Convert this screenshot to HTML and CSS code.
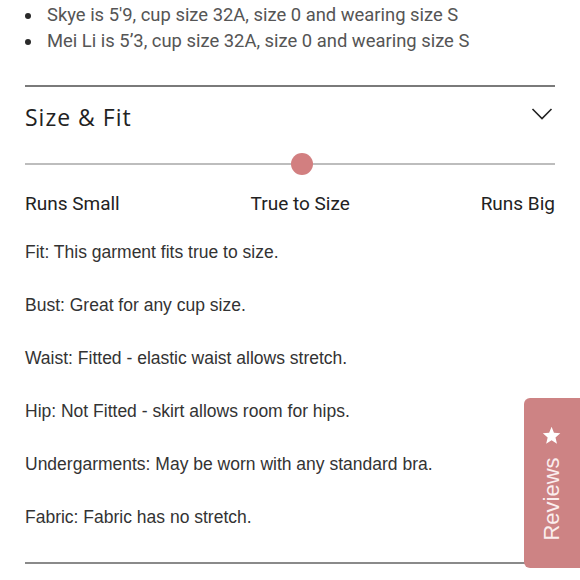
FILE: index.html
```html
<html>
<head>
<title>Size &amp; Fit</title>
<link rel="stylesheet" href="styles.css">
</head>
<body>
<div class="page">
	<ul class="models">
		<li>Skye is 5'9, cup size 32A, size 0 and wearing size S</li>
		<li>Mei Li is 5’3, cup size 32A, size 0 and wearing size S</li>
	</ul>

	<div class="section">
		<div class="sectionHead">
			<h2>Size &amp; Fit</h2>
			<svg class="chevron" width="22" height="14" viewBox="0 0 22 14"><path d="M1.5 2 L11 11.5 L20.5 2" fill="none" stroke="#222" stroke-width="1.6"/></svg>
		</div>

		<div class="scale">
			<div class="track"><span class="knob"></span></div>
			<div class="scaleLabels">
				<span>Runs Small</span>
				<span>True to Size</span>
				<span>Runs Big</span>
			</div>
		</div>

		<div class="notes">
			<p>Fit: This garment fits true to size.</p>
			<p>Bust: Great for any cup size.</p>
			<p>Waist: Fitted - elastic waist allows stretch.</p>
			<p>Hip: Not Fitted - skirt allows room for hips.</p>
			<p>Undergarments: May be worn with any standard bra.</p>
			<p>Fabric: Fabric has no stretch.</p>
		</div>
	</div>
</div>

<div class="reviewsTab">
	<span class="reviewsText">Reviews<svg class="star" width="20" height="20" viewBox="0 0 24 24"><path d="M12 1.5 L14.9 8.6 L22.5 9.2 L16.7 14.2 L18.5 21.7 L12 17.7 L5.5 21.7 L7.3 14.2 L1.5 9.2 L9.1 8.6 Z" fill="#fff"/></svg></span>
</div>
</body>
</html>
```

FILE: styles.css
```css
body {margin: 0; background: #fff; color: #222;}

.page {padding: 0 25px 0 25px;}

/* Model list */
.models {margin: 0; padding: 2px 0 0 0; list-style: none; font-family: Roboto, sans-serif; font-size: 18.4px; color: #555; line-height: 26px;}
.models li {display: flex; align-items: center;}
.models li::before {content: ""; flex: none; width: 6px; height: 6px; border-radius: 50%; background: #2a2a2a; margin: 1px 16px 0 0;}

/* Accordion section */
.section {margin-top: 31px; border-top: 2px solid #7a7a7a; border-bottom: 2px solid #8a8a8a;}
.sectionHead {display: flex; justify-content: space-between; align-items: center; height: 60px;}
.sectionHead h2 {margin: 0; font-family: "Open Sans", sans-serif; font-weight: 400; font-size: 23px; letter-spacing: 1px; color: #222;}
.chevron {margin-right: 2px; margin-top: -6px;}

/* Fit scale */
.scale {margin-top: 16px;}
.track {position: relative; height: 2px; background: #bdbdbd;}
.knob {position: absolute; left: 52.3%; top: 50%; width: 22px; height: 22px; margin: -11.5px 0 0 -11px; border-radius: 50%; background: #d27f80;}
.scaleLabels {display: flex; justify-content: space-between; margin-top: 28px; font-family: Roboto, sans-serif; font-size: 19px; line-height: 22px; color: #222;}

/* Notes */
.notes {padding: 27px 0 35px 0; font-family: "Liberation Sans", Arial, sans-serif; font-size: 17.5px; color: #333;}
.notes p {margin: 0 0 33px 0; line-height: 20px;}
.notes p:last-child {margin-bottom: 0;}

/* Floating reviews tab */
.reviewsTab {position: fixed; right: 0; top: 398px; width: 56px; height: 170px; background: #cd8384; border-radius: 6px 0 0 6px; display: flex; align-items: center; justify-content: center;}
.reviewsText {display: flex; align-items: center; transform: rotate(-90deg); white-space: nowrap; font-family: "Liberation Sans", Arial, sans-serif; font-size: 22px; color: #fbeeee;}
.star {transform: rotate(90deg); margin-left: 12px;}
```
